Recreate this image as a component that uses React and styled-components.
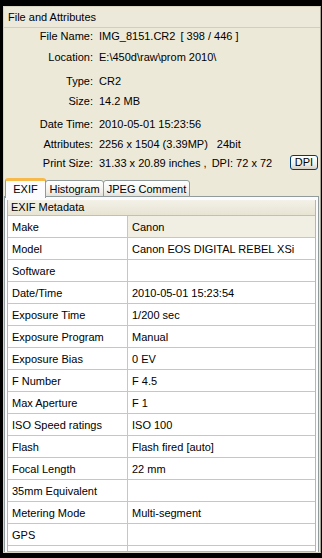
import React from "react";
import styled, { createGlobalStyle } from "styled-components";

const Global = createGlobalStyle`
  html, body { margin: 0; padding: 0; background: #000; }
  body { font-family: "Liberation Sans", Arial, sans-serif; font-size: 11px; color: #000; }
  * { box-sizing: border-box; }
`;

const Window = styled.div`
  margin: 6px 1px 0 3px;
  width: 318px;
  height: 547px;
  background: #ece9d8;
  border: 1px solid #d8d4c4;
  border-right-color: #a6a292;
  display: flex;
  flex-direction: column;
  overflow: hidden;
`;

const SectionTitle = styled.div`
  height: 21px;
  line-height: 21px;
  padding-left: 4px;
  border-bottom: 1px solid #d2cebf;
  background: #ede9da;
`;

const InfoRow = styled.div`
  display: grid;
  grid-template-columns: 89px 1fr auto;
  column-gap: 6px;
  height: 16px;
  line-height: 17px;
  margin-top: ${(p) => p.$gap}px;
  padding-right: 2px;
  white-space: pre;
`;

const Label = styled.span`
  text-align: right;
`;

const Value = styled.span`
  overflow: hidden;
`;

const Spacer = styled.span`
  display: inline-block;
  width: ${(p) => p.$w}px;
`;

const Button = styled.button`
  width: 28px;
  height: 15px;
  padding: 0;
  font: inherit;
  line-height: 13px;
  border: 1px solid #003c74;
  border-radius: 3px;
  background: linear-gradient(#ffffff, #f0f0ea 60%, #d6d0c5);
  color: #000;
`;

const TabStrip = styled.div`
  display: flex;
  align-items: flex-end;
  margin-top: 6px;
  padding-left: 1px;
  height: 20px;
  position: relative;
  z-index: 1;
`;

const Tab = styled.div`
  height: ${(p) => (p.$active ? 20 : 17)}px;
  width: ${(p) => p.$w}px;
  line-height: ${(p) => (p.$active ? 15 : 14)}px;
  padding-top: 1px;
  text-align: center;
  border: 1px solid #919b9c;
  border-bottom: ${(p) => (p.$active ? "none" : "1px solid #919b9c")};
  border-top: ${(p) => (p.$active ? "3px solid #f7b94a" : "1px solid #919b9c")};
  border-radius: 3px 3px 0 0;
  background: ${(p) => (p.$active ? "#fcfcfe" : "linear-gradient(#ffffff, #f1f0ea 70%, #e3e1d8)")};
  margin-left: ${(p) => (p.$active ? 0 : -1)}px;
  margin-bottom: ${(p) => (p.$active ? -1 : 0)}px;
`;

const TabPanel = styled.div`
  margin: -1px 1px 0 0;
  flex: 1;
  border: 1px solid #919b9c;
  border-bottom: none;
  background: #fcfcfe;
  padding: 3px 2px 0 2px;
  display: flex;
  flex-direction: column;
  overflow: hidden;
`;

const Table = styled.div`
  flex: 1;
  background: #fff;
  border-left: 1px solid #b5b5b5;
  border-right: 1px solid #b5b5b5;
  border-bottom: 1px solid #b5b5b5;
  overflow: hidden;
`;

const TableHeader = styled.div`
  height: 16px;
  line-height: 15px;
  padding-left: 3px;
  background: linear-gradient(#f3f1e8, #e8e4d3);
  border-bottom: 1px solid #c4c0b0;
`;

const Row = styled.div`
  display: grid;
  grid-template-columns: 120px 1fr;
  height: 22px;
  border-bottom: 1px solid #c6c6c6;
`;

const Cell = styled.div`
  line-height: 21px;
  padding: 1px 0 0 4px;
  white-space: nowrap;
  overflow: hidden;
  background: ${(p) => (p.$focus ? "#f1efe3" : "#fff")};
  border-right: ${(p) => (p.$first ? "1px solid #c6c6c6" : "none")};
`;

const info = [
  { label: "File Name:", gap: 0, value: <>IMG_8151.CR2<Spacer $w={5} />[ 398 / 446 ]</> },
  { label: "Location:", gap: 5, value: "E:\\450d\\raw\\prom 2010\\" },
  { label: "Type:", gap: 8, value: "CR2" },
  { label: "Size:", gap: 4, value: "14.2 MB" },
  { label: "Date Time:", gap: 7, value: "2010-05-01 15:23:56" },
  { label: "Attributes:", gap: 4, value: <>2256 x 1504 (3.39MP)<Spacer $w={9} />24bit</> },
];

const rows = [
  ["Make", "Canon"],
  ["Model", "Canon EOS DIGITAL REBEL XSi"],
  ["Software", ""],
  ["Date/Time", "2010-05-01 15:23:54"],
  ["Exposure Time", "1/200 sec"],
  ["Exposure Program", "Manual"],
  ["Exposure Bias", "0 EV"],
  ["F Number", "F 4.5"],
  ["Max Aperture", "F 1"],
  ["ISO Speed ratings", "ISO 100"],
  ["Flash", "Flash fired [auto]"],
  ["Focal Length", "22 mm"],
  ["35mm Equivalent", ""],
  ["Metering Mode", "Multi-segment"],
  ["GPS", ""],
  ["", ""],
];

export default function App() {
  return (
    <>
      <Global />
      <Window>
        <SectionTitle>File and Attributes</SectionTitle>
        {info.map((r) => (
          <InfoRow key={r.label} $gap={r.gap}>
            <Label>{r.label}</Label>
            <Value>{r.value}</Value>
            <span />
          </InfoRow>
        ))}
        <InfoRow $gap={3}>
          <Label>Print Size:</Label>
          <Value>31.33 x 20.89 inches ,<Spacer $w={5} />DPI: 72 x 72</Value>
          <Button>DPI</Button>
        </InfoRow>
        <TabStrip>
          <Tab $active $w={41}>EXIF</Tab>
          <Tab $w={59}>Histogram</Tab>
          <Tab $w={87}>JPEG Comment</Tab>
        </TabStrip>
        <TabPanel>
          <Table>
            <TableHeader>EXIF Metadata</TableHeader>
            {rows.map(([k, v], i) => (
              <Row key={i}>
                <Cell $first>{k}</Cell>
                <Cell $focus={i === 0}>{v}</Cell>
              </Row>
            ))}
          </Table>
        </TabPanel>
      </Window>
    </>
  );
}
